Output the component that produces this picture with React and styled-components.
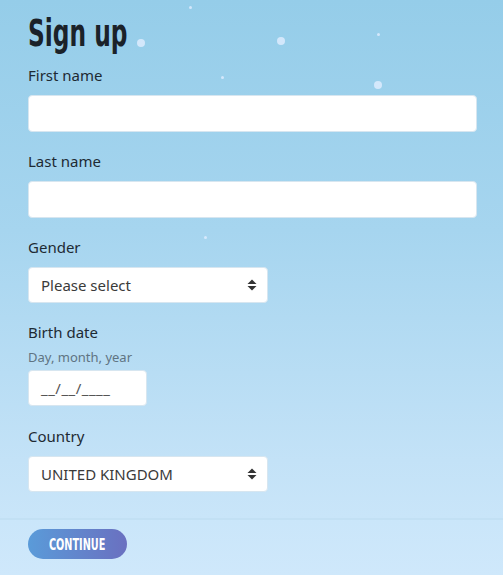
import React from "react";
import styled, { createGlobalStyle } from "styled-components";

const flakes = [
  { x: 190, y: 7, r: 1.5 },
  { x: 141, y: 43, r: 4 },
  { x: 281, y: 41, r: 4 },
  { x: 378, y: 34, r: 1.5 },
  { x: 222, y: 77, r: 1.5 },
  { x: 378, y: 85, r: 4 },
  { x: 205, y: 237, r: 1.5 },
];

export default function App() {
  return (
    <Page>
      <GlobalStyle />
      {flakes.map((f, i) => (
        <Flake key={i} $r={f.r} style={{ left: f.x - f.r, top: f.y - f.r }} />
      ))}
      <Form>
        <Title>
          <span>Sign up</span>
        </Title>

        <Field>
          <Label>First name</Label>
          <Input />
        </Field>

        <Field>
          <Label>Last name</Label>
          <Input />
        </Field>

        <Field>
          <Label>Gender</Label>
          <Select>
            Please select
            <Arrows />
          </Select>
        </Field>

        <Field $extra>
          <Label $tight>Birth date</Label>
          <Hint>Day, month, year</Hint>
          <DateBox>__/__/____</DateBox>
        </Field>

        <Field>
          <Label>Country</Label>
          <Select>
            UNITED KINGDOM
            <Arrows />
          </Select>
        </Field>
      </Form>
      <Footer>
        <Button>
          <span>CONTINUE</span>
        </Button>
      </Footer>
    </Page>
  );
}

function Arrows() {
  return (
    <ArrowIcon width="10" height="14" viewBox="0 0 10 14">
      <path d="M5 1.5 L9.5 6 H0.5 Z" fill="#333" />
      <path d="M5 12.5 L9.5 8 H0.5 Z" fill="#333" />
    </ArrowIcon>
  );
}

const GlobalStyle = createGlobalStyle`
  html, body {
    margin: 0;
    padding: 0;
    background: #cde8fb;
  }
  body {
    font-family: "Noto Sans", "Open Sans", sans-serif;
  }
`;

const Page = styled.div`
  position: relative;
  width: 503px;
  height: 575px;
  overflow: hidden;
  background: linear-gradient(
    180deg,
    #95cde9 0%,
    #a6d5ef 40%,
    #c3e2f7 80%,
    #cfe8fb 100%
  );
`;

const Flake = styled.div`
  position: absolute;
  width: ${(p) => p.$r * 2}px;
  height: ${(p) => p.$r * 2}px;
  border-radius: 50%;
  background: rgba(226, 238, 255, 0.8);
`;

const Form = styled.div`
  padding: 14px 26px 0 28px;
  display: flex;
  flex-direction: column;
  height: 518px;
  box-sizing: border-box;
`;

const Title = styled.h1`
  margin: 0 0 5px;
  height: 45px;
  font-family: "DejaVu Sans Condensed", "DejaVu Sans", sans-serif;
  font-stretch: condensed;
  font-weight: bold;
  font-size: 37px;
  line-height: 40px;
  color: #1b2229;

  span {
    display: inline-block;
    transform: scaleX(0.7);
    transform-origin: left center;
  }
`;

const Field = styled.div`
  display: flex;
  flex-direction: column;
  margin-bottom: ${(p) => (p.$extra ? "19px" : "18px")};
`;

const Label = styled.div`
  font-size: 15px;
  line-height: 22px;
  color: #1e2a33;
  margin-bottom: ${(p) => (p.$tight ? "5px" : "9px")};
`;

const Hint = styled.div`
  font-size: 13px;
  line-height: 18px;
  color: #5f7482;
  margin-bottom: 4px;
`;

const Box = styled.div`
  box-sizing: border-box;
  background: #fff;
  border: 1px solid #d7e6f0;
  border-radius: 4px;
  height: 37px;
  display: flex;
  align-items: center;
  padding: 0 12px;
  font-size: 15px;
  color: #3a3a3a;
`;

const Input = styled(Box)`
  width: 449px;
`;

const Select = styled(Box)`
  width: 240px;
  height: 36px;
  justify-content: space-between;
  padding-right: 10px;
`;

const ArrowIcon = styled.svg`
  display: block;
`;

const DateBox = styled(Box)`
  width: 119px;
  height: 36px;
  color: #555;
  letter-spacing: 0.5px;
`;

const Footer = styled.div`
  height: 57px;
  padding: 9px 0 0 28px;
  box-sizing: border-box;
  border-top: 2px solid rgba(165, 204, 230, 0.3);
  background: linear-gradient(180deg, #cae6fa 0%, #cfe8fb 100%);
`;

const Button = styled.div`
  width: 99px;
  height: 30px;
  border-radius: 15px;
  background: linear-gradient(90deg, #5a9bd9 0%, #6a70c0 100%);
  display: flex;
  align-items: center;
  justify-content: center;

  span {
    display: inline-block;
    font-family: "DejaVu Sans Condensed", "DejaVu Sans", sans-serif;
    font-stretch: condensed;
    font-weight: bold;
    font-size: 15px;
    color: #fff;
    transform: scaleX(0.72);
    margin-top: 1px;
  }
`;
